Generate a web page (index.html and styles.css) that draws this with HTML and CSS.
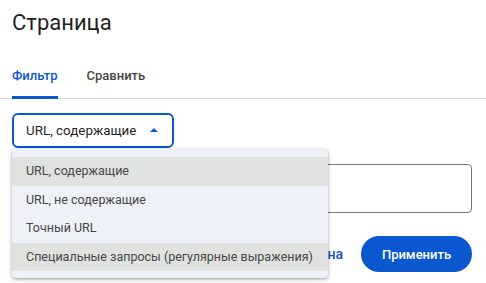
FILE: index.html
```html
<!DOCTYPE html>
<html lang="ru">
<head>
    <meta charset="UTF-8">
    <title>Страница</title>
    <link rel="stylesheet" href="styles.css">
</head>
<body>
    <h1 class="page-title">Страница</h1>

    <!-- Tabs -->
    <div class="tabs">
        <span class="tab active">Фильтр</span>
        <span class="tab">Сравнить</span>
    </div>

    <div class="panel">
        <div class="select-wrap">
            <div class="select">
                <span>URL, содержащие</span>
                <svg class="caret" width="8" height="4" viewBox="0 0 8 4"><path d="M0 4 L4 0 L8 4 Z" fill="#0b57d0"/></svg>
            </div>

            <!-- open dropdown -->
            <ul class="menu">
                <li class="menu-item hover">URL, содержащие</li>
                <li class="menu-item">URL, не содержащие</li>
                <li class="menu-item">Точный URL</li>
                <li class="menu-item hover">Специальные запросы (регулярные выражения)</li>
            </ul>
        </div>

        <div class="field"></div>

        <div class="actions">
            <a class="link" href="#">Отмена</a>
            <button class="btn">Применить</button>
        </div>
    </div>
</body>
</html>
```

FILE: styles.css
```css
* {
    margin: 0;
    padding: 0;
    box-sizing: border-box;
}

body {
    font-family: 'Roboto', 'Noto Sans', sans-serif;
    background-color: #ffffff;
    color: #1f1f1f;
    width: 486px;
    height: 283px;
    overflow: hidden;
}

/* --- Title --- */
.page-title {
    font-size: 22px;
    font-weight: 400;
    line-height: 28px;
    padding: 9px 12px 0;
    color: #1f1f1f;
}

/* --- Tabs --- */
.tabs {
    display: flex;
    gap: 29px;
    padding: 0 12px;
    margin-top: 30px;
    border-bottom: 1px solid #dadce0;
}
.tab {
    font-size: 13px;
    font-weight: 500;
    line-height: 18px;
    color: #444746;
    padding-bottom: 11px;
    border-bottom: 3px solid transparent;
    margin-bottom: -1px;
}
.tab.active {
    color: #0b57d0;
    border-bottom-color: #0b57d0;
}

/* --- Panel --- */
.panel {
    padding: 14px 14px 0 12px;
}

.select-wrap {
    position: relative;
}
.select {
    width: 162px;
    height: 35px;
    border: 2px solid #0b57d0;
    border-radius: 6px;
    display: flex;
    align-items: center;
    justify-content: space-between;
    padding: 0 14px 0 12px;
    font-size: 13.4px;
    color: #1f1f1f;
}
.caret {
    display: block;
    margin-top: -1px;
}

/* --- Dropdown menu --- */
.menu {
    position: absolute;
    top: 36px;
    left: 0;
    width: 316px;
    list-style: none;
    background-color: #eef1f7;
    border-radius: 4px;
    padding: 8px 0 7px;
    box-shadow: 0 1px 3px rgba(0, 0, 0, 0.3), 0 2px 6px rgba(0, 0, 0, 0.12);
    z-index: 2;
}
.menu-item {
    height: 28.5px;
    line-height: 28.5px;
    padding: 0 14px;
    font-size: 12.5px;
    color: #444746;
    white-space: nowrap;
}
.menu-item.hover {
    background-color: #e0e2e0;
}

/* --- Text field --- */
.field {
    margin-top: 16px;
    height: 49px;
    border: 1px solid #747775;
    border-radius: 4px;
}

/* --- Actions --- */
.actions {
    display: flex;
    justify-content: flex-end;
    align-items: center;
    gap: 18px;
    margin-top: 23px;
}
.link {
    font-size: 14px;
    font-weight: 500;
    color: #0b57d0;
    text-decoration: none;
}
.btn {
    width: 111px;
    height: 36px;
    border: none;
    border-radius: 18px;
    background-color: #0b57d0;
    color: #ffffff;
    font-family: 'Roboto', sans-serif;
    font-size: 13px;
    font-weight: 500;
}
```
